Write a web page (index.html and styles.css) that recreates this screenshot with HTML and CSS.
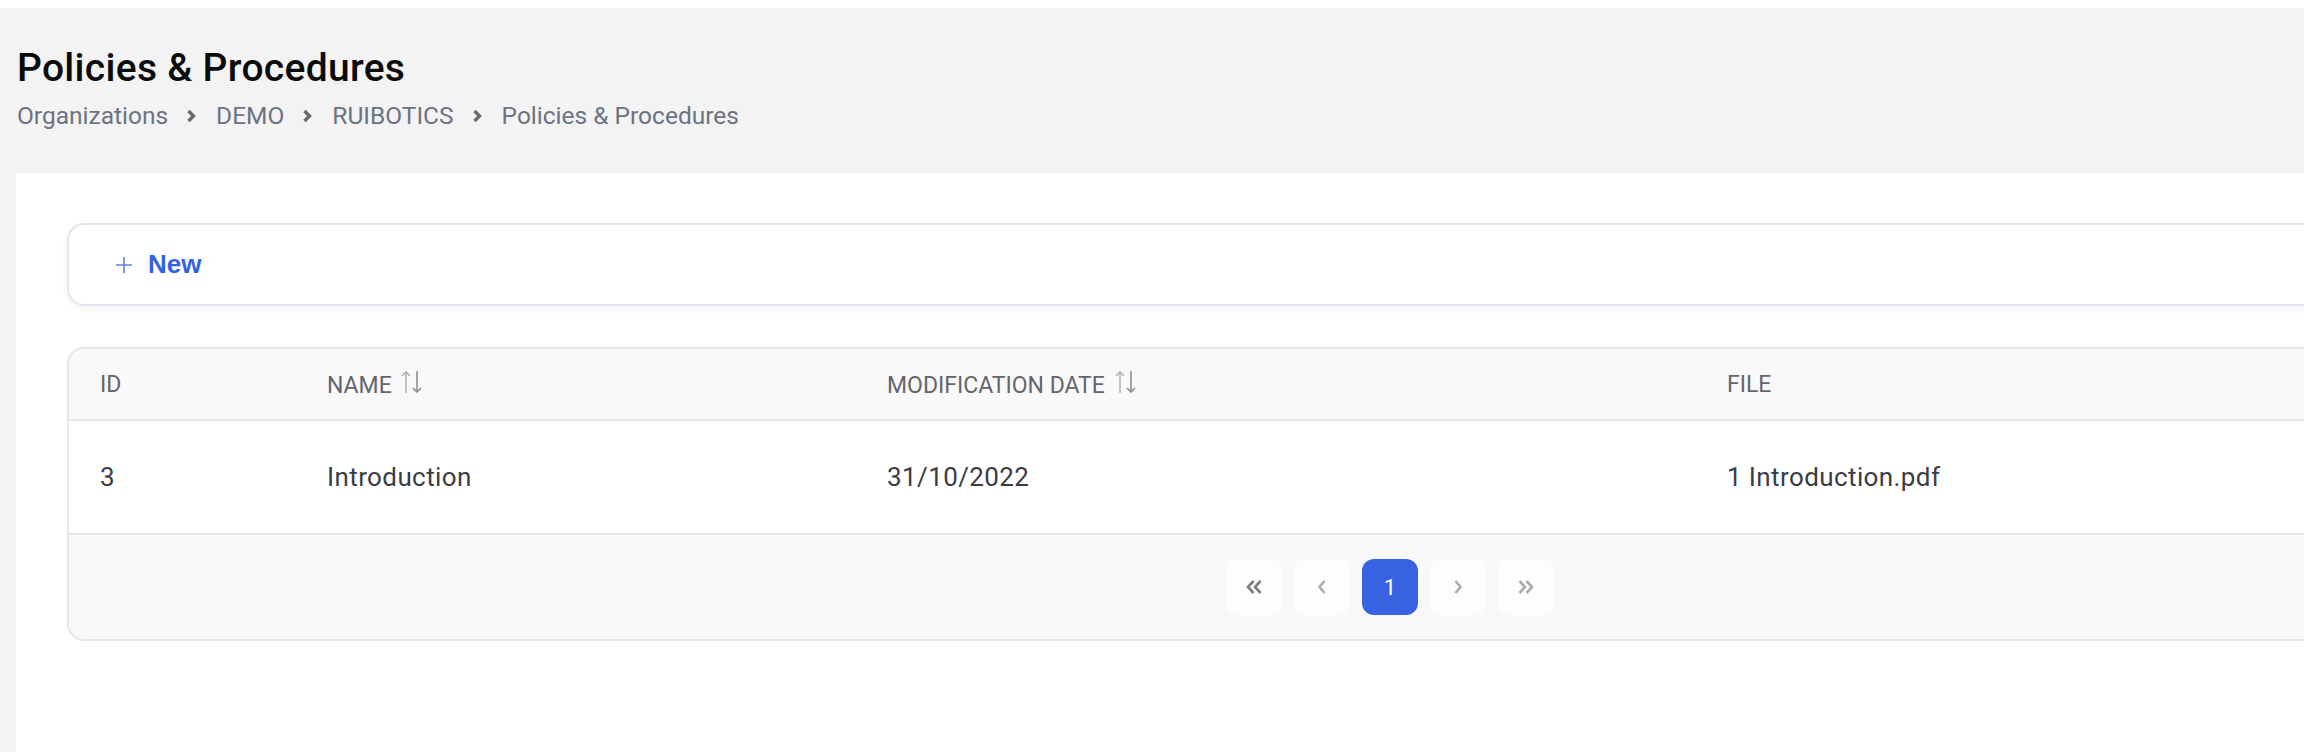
FILE: index.html
```html
<!DOCTYPE html>
<html lang="en">

<head>
    <meta charset="UTF-8">
    <meta name="viewport" content="width=device-width, initial-scale=1.0">
    <title>Policies &amp; Procedures</title>
    <link rel="stylesheet" href="styles.css">
</head>

<body>
    <div class="app">
        <header class="page-head">
            <h1 class="page-title">Policies &amp; Procedures</h1>
            <nav class="crumbs">
                <a href="#">Organizations</a>
                <svg class="crumb-sep" viewBox="0 0 10 14"><path d="M2.5 2l5 5-5 5" /></svg>
                <a href="#">DEMO</a>
                <svg class="crumb-sep" viewBox="0 0 10 14"><path d="M2.5 2l5 5-5 5" /></svg>
                <a href="#">RUIBOTICS</a>
                <svg class="crumb-sep" viewBox="0 0 10 14"><path d="M2.5 2l5 5-5 5" /></svg>
                <span>Policies &amp; Procedures</span>
            </nav>
        </header>

        <main class="panel">
            <div class="toolbar">
                <button class="btn-new">
                    <svg class="plus" viewBox="0 0 18 18"><path d="M9 1v16M1 9h16" /></svg>
                    <span>New</span>
                </button>
            </div>

            <div class="table-card">
                <table class="grid">
                    <thead>
                        <tr>
                            <th class="col-id">ID</th>
                            <th class="col-name">NAME
                                <svg class="sort" viewBox="0 0 22 26">
                                    <path class="up" d="M5 24V3M1 7l4-4 4 4" />
                                    <path class="down" d="M16 2v21M12 19l4 4 4-4" />
                                </svg>
                            </th>
                            <th class="col-date">MODIFICATION DATE
                                <svg class="sort" viewBox="0 0 22 26">
                                    <path class="up" d="M5 24V3M1 7l4-4 4 4" />
                                    <path class="down" d="M16 2v21M12 19l4 4 4-4" />
                                </svg>
                            </th>
                            <th class="col-file">FILE</th>
                        </tr>
                    </thead>
                    <tbody>
                        <tr>
                            <td>3</td>
                            <td>Introduction</td>
                            <td>31/10/2022</td>
                            <td>1 Introduction.pdf</td>
                        </tr>
                    </tbody>
                </table>

                <div class="pager">
                    <button class="page-btn first">
                        <svg viewBox="0 0 20 20"><path d="M9.5 4L4 10l5.5 6M16.5 4L11 10l5.5 6" /></svg>
                    </button>
                    <button class="page-btn">
                        <svg viewBox="0 0 20 20"><path d="M12.5 4L7.5 10l5 6" /></svg>
                    </button>
                    <button class="page-btn active">1</button>
                    <button class="page-btn">
                        <svg viewBox="0 0 20 20"><path d="M7.5 4l5 6-5 6" /></svg>
                    </button>
                    <button class="page-btn">
                        <svg viewBox="0 0 20 20"><path d="M3.5 4L9 10l-5.5 6M10.5 4l5.5 6-5.5 6" /></svg>
                    </button>
                </div>
            </div>
        </main>
    </div>
</body>

</html>
```

FILE: styles.css
```css
body {
    margin: 0;
    background-color: #ffffff;
    font-family: Roboto, "Noto Sans", sans-serif;
    overflow: hidden;
}

.app {
    margin-top: 8px;
    width: 2764px;
    height: 744px;
    padding-left: 16px;
    background-color: #f3f3f3;
    box-sizing: border-box;
}

/* page title + breadcrumb */
.page-head {
    height: 165px;
    padding: 37px 0 0 1px;
    box-sizing: border-box;
}

.page-title {
    margin: 0;
    font-size: 39px;
    line-height: 46px;
    font-weight: 500;
    color: #0b0b0b;
    letter-spacing: 0.3px;
}

.crumbs {
    margin-top: 10px;
    display: flex;
    align-items: center;
    font-size: 24.5px;
    line-height: 30px;
    color: #6b7382;
}

.crumbs a {
    color: inherit;
    text-decoration: none;
}

.crumb-sep {
    width: 10px;
    height: 14px;
    margin: 0 20px 0 18px;
    fill: none;
    stroke: #6a6a6a;
    stroke-width: 3.4;
}

/* white content panel */
.panel {
    height: 579px;
    padding: 50px 51px;
    background-color: #ffffff;
    box-sizing: border-box;
}

.toolbar {
    height: 83px;
    display: flex;
    align-items: center;
    padding-left: 46px;
    border: 2px solid #e4e7ef;
    border-radius: 17px;
    box-shadow: 0 3px 8px rgba(30, 40, 80, 0.05);
    box-sizing: border-box;
}

.btn-new {
    display: flex;
    align-items: center;
    gap: 15px;
    padding: 0;
    border: none;
    background: none;
    font-family: "Liberation Sans", Arial, sans-serif;
    font-size: 26px;
    font-weight: bold;
    color: #3562e0;
    cursor: pointer;
}

.plus {
    width: 18px;
    height: 18px;
    fill: none;
    stroke: #5a7fe8;
    stroke-width: 1.6;
}

/* table */
.table-card {
    margin-top: 41px;
    border: 2px solid #e6e6e6;
    border-radius: 17px;
    overflow: hidden;
    background-color: #ffffff;
}

.grid {
    width: 100%;
    border-collapse: collapse;
    table-layout: fixed;
}

.grid th {
    height: 70px;
    padding: 0 0 0 26px;
    text-align: left;
    font-size: 23px;
    font-weight: 400;
    color: #64646d;
    background-color: #f9f9f9;
    border-bottom: 2px solid #e6e6e6;
}

.grid th:first-child,
.grid td:first-child {
    padding-left: 31px;
}

.col-id { width: 201px; }
.col-name { width: 534px; }
.col-date { width: 814px; }

.grid td {
    height: 112px;
    padding: 0 0 0 26px;
    font-size: 26px;
    color: #3c3c44;
    letter-spacing: 0.4px;
    border-bottom: 2px solid #e6e6e6;
}

.sort {
    width: 22px;
    height: 26px;
    margin-left: 4px;
    vertical-align: -2px;
    fill: none;
    stroke-width: 1.6;
}

.sort .up { stroke: #b3b3b8; }
.sort .down { stroke: #8e8e94; }

/* pagination */
.pager {
    height: 104px;
    display: flex;
    align-items: center;
    justify-content: center;
    gap: 12px;
    background-color: #f9f9f9;
}

.page-btn {
    width: 56px;
    height: 56px;
    display: flex;
    align-items: center;
    justify-content: center;
    padding: 0;
    border: none;
    border-radius: 12px;
    background-color: #fdfdfd;
    font-family: Roboto, sans-serif;
    font-size: 22px;
    color: #ffffff;
}

.page-btn svg {
    width: 20px;
    height: 20px;
    fill: none;
    stroke: #ababab;
    stroke-width: 2.6;
}

.page-btn.first svg {
    stroke: #7f7f7f;
}

.page-btn.active {
    background-color: #3763e2;
}
```
